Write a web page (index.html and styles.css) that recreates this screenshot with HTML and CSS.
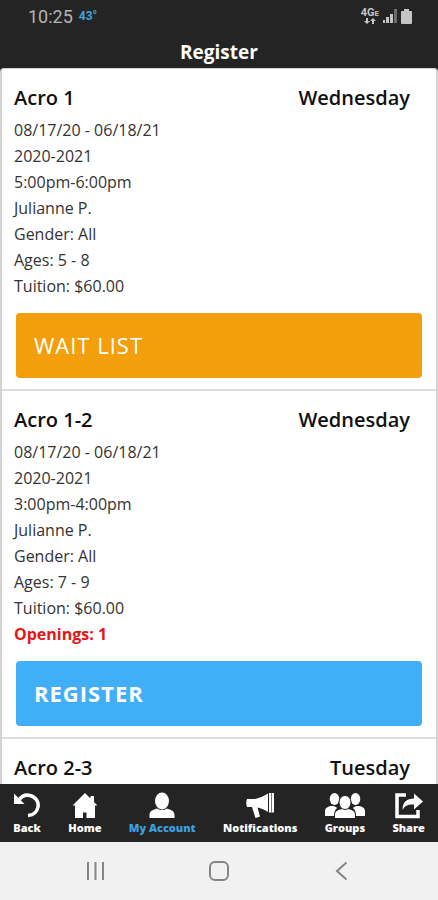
FILE: index.html
```html
<!DOCTYPE html>
<html lang="en">
<head>
<meta charset="utf-8">
<meta name="viewport" content="width=device-width, initial-scale=1">
<title>Register</title>
<link rel="stylesheet" href="styles.css">
</head>
<body>
<header class="top">
  <div class="status">
    <span class="clock">10:25</span>
    <span class="temp">43°</span>
    <span class="indicators">
      <span class="network">
        <span class="network-type">4G<small>E</small></span>
        <svg width="12" height="6" viewBox="0 0 12 6" fill="currentColor" aria-hidden="true"><path d="M2 0h2v3h2L3 6 0 3h2zM8 6h2V3h2L9 0 6 3h2z"/></svg>
      </span>
      <svg width="14" height="14" viewBox="0 0 14 14" aria-hidden="true"><path fill="#c4c4c4" d="M0 11h2v3H0zM3 8h3v6H3zM7 5h3v9H7z"/><path fill="#6c6c6c" d="M11 0h3v14h-3z"/></svg>
      <svg width="11" height="15" viewBox="0 0 11 15" fill="#c4c4c4" aria-hidden="true"><path d="M3 0h5v2h2q1 0 1 1v11q0 1-1 1H1q-1 0-1-1V3q0-1 1-1h2z"/></svg>
    </span>
  </div>
  <h1 class="title">Register</h1>
</header>

<main class="list">
  <article class="card">
    <div class="card-head"><h2>Acro 1</h2><span>Wednesday</span></div>
    <ul class="details">
      <li>08/17/20 - 06/18/21</li>
      <li>2020-2021</li>
      <li>5:00pm-6:00pm</li>
      <li>Julianne P.</li>
      <li>Gender: All</li>
      <li>Ages: 5 - 8</li>
      <li>Tuition: $60.00</li>
    </ul>
    <button class="action wait" type="button">WAIT LIST</button>
  </article>
  <article class="card">
    <div class="card-head"><h2>Acro 1-2</h2><span>Wednesday</span></div>
    <ul class="details">
      <li>08/17/20 - 06/18/21</li>
      <li>2020-2021</li>
      <li>3:00pm-4:00pm</li>
      <li>Julianne P.</li>
      <li>Gender: All</li>
      <li>Ages: 7 - 9</li>
      <li>Tuition: $60.00</li>
      <li class="openings">Openings: 1</li>
    </ul>
    <button class="action register" type="button">REGISTER</button>
  </article>
  <article class="card">
    <div class="card-head"><h2>Acro 2-3</h2><span>Tuesday</span></div>
  </article>
</main>

<nav class="tabs" aria-label="Main">
  <a href="#back">
    <svg width="28" height="28" viewBox="0 0 28 28" aria-hidden="true"><path d="M6 8C9 3.500 13 2.500 17 3.500c6 1.500 9 6.500 8 11.500-1 5-5 8-10 8.500" fill="none" stroke="currentColor" stroke-width="3.500"/><path d="M1 1.500v10.500h10.500z" fill="currentColor"/></svg>
    <span>Back</span>
  </a>
  <a href="#home">
    <svg width="28" height="28" viewBox="0 0 28 28" fill="currentColor" aria-hidden="true"><path d="M14 1 1.500 13.500H4V26h8v-5.500h3.500V26H24V13.500h2.500L23 10V4h-3.500v2.500z"/></svg>
    <span>Home</span>
  </a>
  <a class="current" href="#account" aria-current="page">
    <svg width="28" height="28" viewBox="0 0 28 28" fill="currentColor" aria-hidden="true"><ellipse cx="14" cy="9" rx="7" ry="8.500"/><path d="M1.500 26v-3c0-4 3-5 8-6.500 2.500 2 6.500 2 9 0 5 1.500 8 2.500 8 6.500v3z"/></svg>
    <span>My Account</span>
  </a>
  <a href="#notifications">
    <svg width="28" height="28" viewBox="0 0 28 28" fill="currentColor" aria-hidden="true"><path d="M1 7h8c5-1 9-3 13-5.500v18.500c-3-2-7-4-10.500-4.500L14 24.500 9.500 26 6 15H1q-1.500-4 0-8zM23 1h5v19.500h-5z"/><path d="M25.500 1v19.500" stroke="#777"/></svg>
    <span>Notifications</span>
  </a>
  <a href="#groups">
    <svg width="40" height="28" viewBox="0 0 40 28" fill="currentColor" aria-hidden="true"><ellipse cx="9.500" cy="7" rx="4.800" ry="6"/><ellipse cx="30.500" cy="7" rx="4.800" ry="6"/><path d="M0 24v-5c0-3 3-5 8-5 2 0 3 1 4 2-2 2-3 4-3 8zM40 24v-5c0-3-3-5-8-5-2 0-3 1-4 2 2 2 3 4 3 8z"/><ellipse cx="20" cy="10.500" rx="6" ry="7" stroke="#242424"/><path d="M10 26v-3c0-4 3-5 7-6 2 1.200 4 1.200 6 0 4 1 7 2 7 6v3z"/></svg>
    <span>Groups</span>
  </a>
  <a href="#share">
    <svg width="28" height="28" viewBox="0 0 28 28" aria-hidden="true"><path d="M11 3H2v21.500h21V18" fill="none" stroke="currentColor" stroke-width="3.500"/><path d="M7.500 18C7.500 10 12 6.500 19 6.500V1.500l9 8-9 8v-5c-5-.5-9 .5-11.500 5.500z" fill="currentColor"/></svg>
    <span>Share</span>
  </a>
</nav>

<footer class="system">
  <button type="button" aria-label="Recent apps"><svg width="20" height="20" viewBox="0 0 20 20"><path d="M2 1v18M9.500 1v18M17 1v18"/></svg></button>
  <button type="button" aria-label="Home screen"><svg width="20" height="20" viewBox="0 0 20 20"><rect x="1" y="1" width="18" height="18" rx="5"/></svg></button>
  <button type="button" aria-label="Go back"><svg width="20" height="20" viewBox="0 0 20 20"><path d="M14.500 1.500 5 10l9.500 8.500"/></svg></button>
</footer>
</body>
</html>
```
FILE: styles.css
```css
* {
  box-sizing: border-box;
}

body {
  margin: 0;
  height: 100vh;
  display: flex;
  flex-direction: column;
  background: #242424;
  color: #111;
  font-family: "Open Sans", "Noto Sans", sans-serif;
}

.top {
  flex: none;
  color: #fff;
}

.status {
  display: flex;
  align-items: center;
  gap: 6px;
  height: 32px;
  margin-bottom: 4px;
  padding: 0 26px 0 28px;
  color: #b4b4b4;
  font-family: Roboto, sans-serif;
}

.clock {
  font-size: 18px;
}

.temp {
  color: #3da5dc;
  font-size: 12px;
  font-weight: 700;
}

.indicators {
  display: flex;
  align-items: center;
  gap: 4px;
  margin-left: auto;
  color: #c4c4c4;
}

.network {
  display: flex;
  flex-direction: column;
  align-items: center;
}

.network-type {
  font-size: 11px;
  line-height: 9px;
  font-weight: 700;
}

.network-type small {
  font-size: 8px;
}

.title {
  margin: 0;
  height: 32px;
  font-size: 19px;
  line-height: 32px;
  font-weight: 700;
  text-align: center;
}

.list {
  flex: 1;
  min-height: 0;
  overflow: hidden;
  background: #fff;
  border: solid #d2d2d2;
  border-width: 1px 2px 0;
  border-radius: 4px 4px 0 0;
}

.card {
  padding: 14px 14px 11px 12px;
  border-bottom: 2px solid #dedede;
}

.card-head {
  display: flex;
  justify-content: space-between;
  padding-right: 12px;
  font-size: 20px;
  line-height: 30px;
  font-weight: 600;
}

.card-head h2 {
  margin: 0;
  font: inherit;
}

.details {
  margin: 4px 0 14px;
  padding: 0;
  list-style: none;
  color: #333;
  font-size: 16px;
  line-height: 26px;
}

.openings {
  color: #e51616;
  font-weight: 700;
}

.action {
  display: block;
  width: calc(100% - 2px);
  height: 65px;
  margin-left: 2px;
  padding: 0 18px 2px;
  border: 0;
  border-radius: 4px;
  color: #fff;
  font-family: inherit;
  font-size: 22px;
  letter-spacing: 1px;
  text-align: left;
}

.wait {
  background: #f39e0b;
}

.register {
  background: #41aef9;
  font-weight: 700;
}

.tabs {
  flex: none;
  display: flex;
  justify-content: space-between;
  height: 58px;
  padding: 8px 13px 0;
  background: #242424;
}

.tabs a {
  display: flex;
  flex-direction: column;
  align-items: center;
  color: #fff;
  font-size: 11px;
  line-height: 16px;
  font-weight: 800;
  text-decoration: none;
}

.tabs svg {
  display: block;
}

.tabs .current span {
  color: #3d9fe0;
}

.system {
  flex: none;
  display: flex;
  justify-content: center;
  gap: 83px;
  height: 58px;
  background: #f1f1f1;
}

.system button {
  width: 40px;
  padding: 0;
  border: 0;
  background: none;
}

.system svg {
  display: block;
  margin: auto;
  fill: none;
  stroke: #858585;
  stroke-width: 2;
}
```
